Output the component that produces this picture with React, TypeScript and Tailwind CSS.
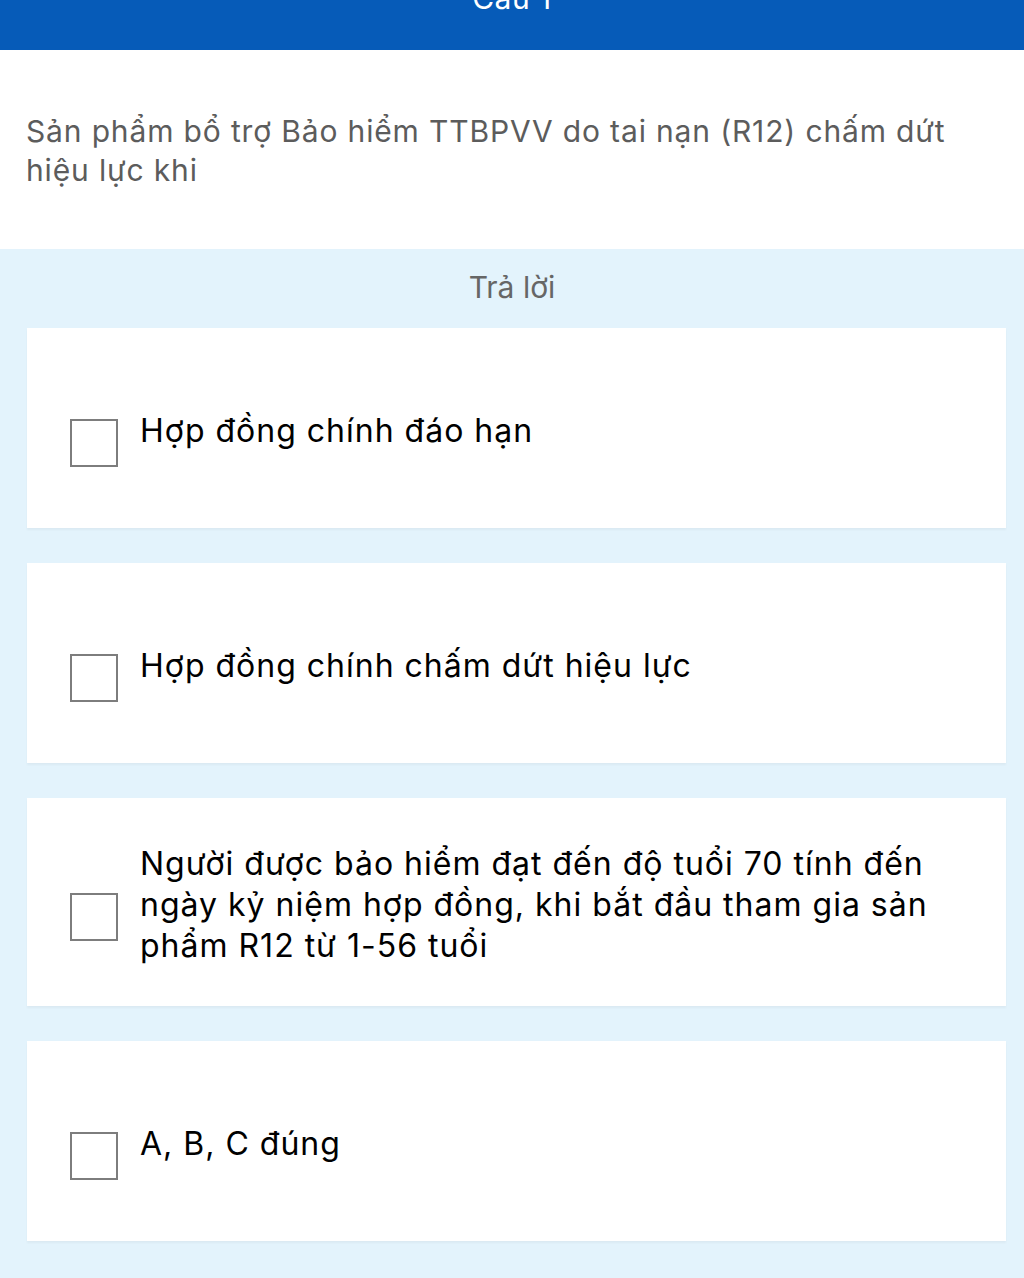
const answers = [
  "Hợp đồng chính đáo hạn",
  "Hợp đồng chính chấm dứt hiệu lực",
  "Người được bảo hiểm đạt đến độ tuổi 70 tính đến ngày kỷ niệm hợp đồng, khi bắt đầu tham gia sản phẩm R12 từ 1-56 tuổi",
  "A, B, C đúng",
];

export default function App() {
  return (
    <div
      className="min-h-[1278px] bg-[#e3f3fc]"
      style={{ fontFamily: "Inter, 'Noto Sans', sans-serif" }}
    >
      {/* Header */}
      <header className="h-[50px] bg-[#065bb8] overflow-hidden flex justify-center">
        <h1 className="text-white text-[30px] leading-[30px] mt-[-17px] font-normal tracking-[0.5px]">Câu 1</h1>
      </header>

      {/* Question */}
      <section className="bg-white h-[199px] px-[26px] pt-[62px]">
        <p className="text-[#5c5c5c] text-[30px] leading-[39px] tracking-[0.85px]">
          Sản phẩm bổ trợ Bảo hiểm TTBPVV do tai nạn (R12) chấm dứt hiệu lực khi
        </p>
      </section>

      {/* Answers */}
      <section className="px-[27px] pb-[37px]">
        <h2 className="text-center text-[#666] text-[30px] leading-[40px] pt-[18px] pb-[21px]">Trả lời</h2>
        <div className="flex flex-col gap-[35px]">
          {answers.map((a) => (
            <div
              key={a}
              className="bg-white min-h-[200px] pt-[43px] pb-[42px] pl-[43px] pr-[50px] flex items-center gap-[22px] shadow-[0_2px_2px_rgba(0,0,0,0.04)] w-[979px]"
            >
              <span className="w-[48px] h-[48px] border-2 border-[#7d7d7d] shrink-0 mt-[24px] mb-[-4px]" />
              <span className="relative top-[2px] text-black text-[32px] leading-[41px] tracking-[1px]">{a}</span>
            </div>
          ))}
        </div>
      </section>
    </div>
  );
}
